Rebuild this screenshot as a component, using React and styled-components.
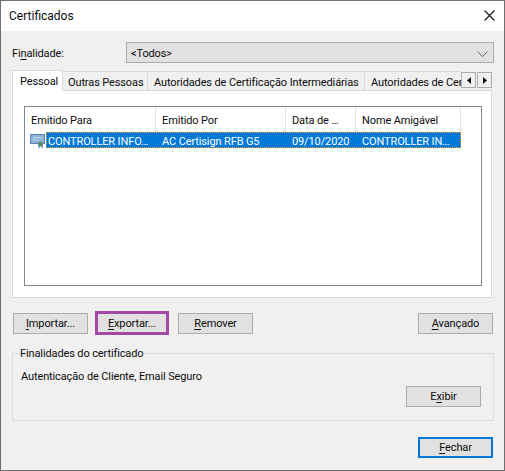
import React from 'react';
import styled, { createGlobalStyle } from 'styled-components';

const GlobalStyle = createGlobalStyle`
  html, body {
    margin: 0;
    padding: 0;
    background: #4a4a4a;
  }
  * {
    box-sizing: border-box;
  }
`;

const Window = styled.div`
  width: 505px;
  height: 471px;
  display: flex;
  flex-direction: column;
  background: #f0f0f0;
  border: 1px solid #6f6f6f;
  font-family: Roboto, "Noto Sans", sans-serif;
  font-size: 11px;
  letter-spacing: -0.12px;
  color: #0c0c0c;
`;

const TitleBar = styled.div`
  height: 30px;
  flex: none;
  display: flex;
  align-items: center;
  justify-content: space-between;
  padding: 0 9px 0 8px;
  background: #fff;
  font-size: 12px;
  letter-spacing: 0;
`;

const CloseIcon = styled.svg`
  width: 11px;
  height: 11px;
  margin-bottom: 1px;
  stroke: #111;
  stroke-width: 1.1;
  display: block;
`;

const Content = styled.div`
  flex: 1;
  display: flex;
  flex-direction: column;
  padding: 11px 10px 0 11px;
`;

const PurposeRow = styled.div`
  display: flex;
  align-items: center;
  height: 21px;
  flex: none;
`;

const PurposeLabel = styled.label`
  width: 114px;
  flex: none;
  padding-top: 2px;
`;

const Select = styled.div`
  flex: 1;
  height: 21px;
  display: flex;
  align-items: center;
  justify-content: space-between;
  padding: 2px 5px 0 4px;
  background: #e1e1e1;
  border: 1px solid #adadad;
`;

const TabsArea = styled.div`
  position: relative;
  margin: 7px 2px 0 0;
  flex: none;
`;

const TabStrip = styled.div`
  position: relative;
  z-index: 1;
  display: flex;
  align-items: flex-end;
  height: 21px;
  width: 449px;
  overflow: hidden;
`;

const Tab = styled.div`
  flex: none;
  height: ${(p) => (p.$active ? '21px' : '19px')};
  width: ${(p) => p.$width}px;
  display: flex;
  align-items: center;
  padding-left: ${(p) => p.$pad}px;
  padding-top: ${(p) => (p.$active ? 0 : 2)}px;
  margin-bottom: ${(p) => (p.$active ? 0 : 1)}px;
  white-space: nowrap;
  background: ${(p) => (p.$active ? '#fff' : '#f0f0f0')};
  border: 1px solid #d9d9d9;
  border-left-width: ${(p) => (p.$active ? 1 : 0)}px;
  border-bottom-width: 0;
`;

const ScrollButtons = styled.div`
  position: absolute;
  z-index: 2;
  top: 2px;
  right: 0;
  display: flex;
  gap: 1px;
`;

const ScrollButton = styled.div`
  width: 15px;
  height: 16px;
  display: flex;
  align-items: center;
  justify-content: center;
  background: #f0f0f0;
  border: 1px solid #adadad;
`;

const TabPanel = styled.div`
  height: 208px;
  margin-top: -1px;
  padding: 15px 9px 11px 11px;
  background: #fff;
  border: 1px solid #d9d9d9;
`;

const ListBox = styled.div`
  height: 100%;
  border: 1px solid #828790;
  background: #fff;
`;

const HeaderRow = styled.div`
  display: flex;
  height: 25px;
`;

const HeaderCell = styled.div`
  width: ${(p) => p.$width}px;
  flex: none;
  display: flex;
  align-items: center;
  padding: 2px 0 0 6px;
  border-right: 1px solid #e5e5e5;
`;

const DataRow = styled.div`
  display: flex;
  align-items: center;
  height: 16px;
  width: 436px;
`;

const CertIcon = styled.svg`
  width: 16px;
  height: 16px;
  margin-left: 5px;
  flex: none;
  display: block;
`;

const SelectedCells = styled.div`
  display: flex;
  align-items: center;
  flex: 1;
  height: 16px;
  background: #0078d7;
  outline: 1px dotted #f39a2b;
  outline-offset: -1px;
  color: #fff;
`;

const DataCell = styled.div`
  width: ${(p) => p.$width}px;
  flex: none;
  padding: 2px 0 0 ${(p) => p.$pad}px;
  white-space: nowrap;
`;

const ActionRow = styled.div`
  display: flex;
  align-items: center;
  margin-top: 13px;
  height: 24px;
  flex: none;
  padding: 0 1px;
`;

const Button = styled.button`
  width: 75px;
  height: 21px;
  flex: none;
  padding: 0;
  background: #e1e1e1;
  border: ${(p) => (p.$focused ? '2px solid #0078d7' : '1px solid #adadad')};
  font: inherit;
  letter-spacing: inherit;
  color: inherit;
`;

const HighlightedButton = styled(Button)`
  width: 74px;
  height: 24px;
  margin: 0 9px 0 7px;
  border: 3px solid #a349a4;
`;

const Spacer = styled.div`
  flex: 1;
`;

const GroupBox = styled.fieldset`
  margin: 12px 0 0;
  padding: 0 12px 0 8px;
  height: 74px;
  border: 1px solid #dcdcdc;
  flex: none;
`;

const GroupLegend = styled.legend`
  padding: 0;
  margin-left: -1px;
  height: 12px;
  line-height: 14px;
`;

const GroupBody = styled.div`
  padding-top: 10px;
  line-height: 16px;
`;

const GroupFooter = styled.div`
  display: flex;
  justify-content: flex-end;
  margin-top: 1px;
`;

const Footer = styled.div`
  display: flex;
  justify-content: flex-end;
  margin-top: 16px;
  padding-right: 1px;
  flex: none;
`;

const Key = styled.span`
  text-decoration: underline;
  text-underline-offset: 2px;
  text-decoration-thickness: 1px;
`;

const columns = [
  { label: 'Emitido Para', width: 131 },
  { label: 'Emitido Por', width: 130 },
  { label: 'Data de …', width: 70 },
  { label: 'Nome Amigável', width: 105 },
];

const tabs = [
  { label: 'Pessoal', width: 51, pad: 7, active: true },
  { label: 'Outras Pessoas', width: 85, pad: 5 },
  { label: 'Autoridades de Certificação Intermediárias', width: 217, pad: 6 },
  { label: 'Autoridades de Certificação Raiz', width: 190, pad: 6 },
];

const App = () => (
  <>
    <GlobalStyle />
    <Window>
      <TitleBar>
        <span>Certificados</span>
        <CloseIcon viewBox="0 0 11 11" fill="none">
          <path d="M0.5 0.5 L10.5 10.5 M10.5 0.5 L0.5 10.5" />
        </CloseIcon>
      </TitleBar>
      <Content>
        <PurposeRow>
          <PurposeLabel>
            Fi<Key>n</Key>alidade:
          </PurposeLabel>
          <Select>
            <span>&lt;Todos&gt;</span>
            <svg width="11" height="6" viewBox="0 0 11 6" fill="none" stroke="#606060">
              <path d="M0.5 0.5 L5.5 5.5 L10.5 0.5" />
            </svg>
          </Select>
        </PurposeRow>
        <TabsArea>
          <TabStrip>
            {tabs.map((tab) => (
              <Tab key={tab.label} $active={tab.active} $width={tab.width} $pad={tab.pad}>
                {tab.label}
              </Tab>
            ))}
          </TabStrip>
          <ScrollButtons>
            <ScrollButton>
              <svg width="4" height="7" viewBox="0 0 4 7" fill="#111">
                <path d="M4 0 L0 3.5 L4 7 Z" />
              </svg>
            </ScrollButton>
            <ScrollButton>
              <svg width="4" height="7" viewBox="0 0 4 7" fill="#111">
                <path d="M0 0 L4 3.5 L0 7 Z" />
              </svg>
            </ScrollButton>
          </ScrollButtons>
          <TabPanel>
            <ListBox>
              <HeaderRow>
                {columns.map((col) => (
                  <HeaderCell key={col.label} $width={col.width}>
                    {col.label}
                  </HeaderCell>
                ))}
              </HeaderRow>
              <DataRow>
                <CertIcon viewBox="0 0 16 16">
                  <rect x="0.5" y="2.5" width="14" height="9" fill="#8fb4dc" stroke="#5a84ad" />
                  <path d="M3 5.5 H12 M3 8 H9" stroke="#c5d9ee" />
                  <path d="M9 13 V16 M12 13 V16" stroke="#1f6fc0" />
                  <circle cx="10.5" cy="12" r="2.5" fill="#5f8a76" />
                </CertIcon>
                <SelectedCells>
                  <DataCell $width={115} $pad={2}>CONTROLLER INFO…</DataCell>
                  <DataCell $width={130} $pad={1}>AC Certisign RFB G5</DataCell>
                  <DataCell $width={70} $pad={1}>09/10/2020</DataCell>
                  <DataCell $width={100} $pad={1}>CONTROLLER IN…</DataCell>
                </SelectedCells>
              </DataRow>
            </ListBox>
          </TabPanel>
        </TabsArea>
        <ActionRow>
          <Button><Key>I</Key>mportar...</Button>
          <HighlightedButton><Key>E</Key>xportar...</HighlightedButton>
          <Button><Key>R</Key>emover</Button>
          <Spacer />
          <Button><Key>A</Key>vançado</Button>
        </ActionRow>
        <GroupBox>
          <GroupLegend>Finalidades do certificado</GroupLegend>
          <GroupBody>Autenticação de Cliente, Email Seguro</GroupBody>
          <GroupFooter>
            <Button>E<Key>x</Key>ibir</Button>
          </GroupFooter>
        </GroupBox>
        <Footer>
          <Button $focused><Key>F</Key>echar</Button>
        </Footer>
      </Content>
    </Window>
  </>
);

export default App;
